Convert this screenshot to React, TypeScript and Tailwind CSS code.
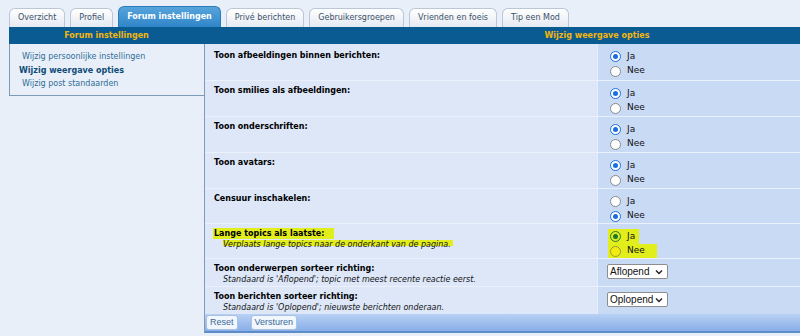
import React from 'react'

type Row = {
  label: string
  desc?: string
  kind: 'radio' | 'select'
  value: string
  h: string
  pt: string
  highlight?: boolean
}

const tabs = [
  'Overzicht',
  'Profiel',
  'Forum instellingen',
  'Privé berichten',
  'Gebruikersgroepen',
  'Vrienden en foeis',
  'Tip een Mod',
]

const rows: Row[] = [
  { label: 'Toon afbeeldingen binnen berichten:', kind: 'radio', value: 'ja', h: 'h-[36px]', pt: 'pt-[6px]' },
  { label: 'Toon smilies als afbeeldingen:', kind: 'radio', value: 'ja', h: 'h-[36px]', pt: 'pt-[4px]' },
  { label: 'Toon onderschriften:', kind: 'radio', value: 'ja', h: 'h-[36px]', pt: 'pt-[4px]' },
  { label: 'Toon avatars:', kind: 'radio', value: 'ja', h: 'h-[36px]', pt: 'pt-[4px]' },
  { label: 'Censuur inschakelen:', kind: 'radio', value: 'nee', h: 'h-[35px]', pt: 'pt-[4px]' },
  {
    label: 'Lange topics als laatste:',
    desc: 'Verplaats lange topics naar de onderkant van de pagina.',
    kind: 'radio',
    value: 'ja',
    h: 'h-[35px]',
    pt: 'pt-[4px]',
    highlight: true,
  },
  {
    label: 'Toon onderwerpen sorteer richting:',
    desc: "Standaard is 'Aflopend'; topic met meest recente reactie eerst.",
    kind: 'select',
    value: 'Aflopend',
    h: 'h-[28px]',
    pt: 'pt-[4px]',
  },
  {
    label: 'Toon berichten sorteer richting:',
    desc: "Standaard is 'Oplopend'; nieuwste berichten onderaan.",
    kind: 'select',
    value: 'Oplopend',
    h: 'h-[28px]',
    pt: 'pt-[4px]',
  },
]

const Radio = ({ checked, hl }: { checked: boolean; hl?: boolean }) => {
  if (hl) {
    return checked ? (
      <span className="flex h-[11px] w-[11px] items-center justify-center rounded-full border border-[#2f7a2a] bg-[#d8ec2a]">
        <span className="h-[5px] w-[5px] rounded-full bg-[#1f7a1f]" />
      </span>
    ) : (
      <span className="h-[11px] w-[11px] rounded-full border border-[#9c9a3a] bg-[#f2ec10]" />
    )
  }
  return checked ? (
    <span className="flex h-[11px] w-[11px] items-center justify-center rounded-full border border-[#1b6fe0] bg-white">
      <span className="h-[5px] w-[5px] rounded-full bg-[#1b6fe0]" />
    </span>
  ) : (
    <span className="h-[11px] w-[11px] rounded-full border border-[#8a8a8a] bg-white" />
  )
}

const RadioCell = ({ value, hl }: { value: string; hl?: boolean }) => (
  <div className="pl-[10px] pt-[5px] text-[9px] text-[#111]">
    <div className={`flex h-[15px] w-fit items-center gap-[6px] pl-[2px] pr-[4px] ${hl ? 'bg-[#e2ee1c]' : ''}`}>
      <Radio checked={value === 'ja'} hl={hl} />
      <span>Ja</span>
    </div>
    <div className={`flex h-[14px] w-fit items-center gap-[6px] pl-[2px] pr-[12px] ${hl ? 'bg-[#e2ee1c]' : ''}`}>
      <Radio checked={value === 'nee'} hl={hl} />
      <span>Nee</span>
    </div>
  </div>
)

const SelectCell = ({ value }: { value: string }) => (
  <div className="pl-[9px] pt-[5px]">
    <div className="flex h-[15px] w-[61px] items-center justify-between rounded-[2px] border border-[#8d8d8d] bg-white pl-[2px] pr-[4px] font-['Liberation_Sans',sans-serif] text-[10px] text-[#111]">
      <span>{value}</span>
      <svg width="8" height="6" viewBox="0 0 8 6" fill="none">
        <path d="M1 1.5l3 3 3-3" stroke="#222" strokeWidth="1.4" />
      </svg>
    </div>
  </div>
)

export default function App() {
  return (
    <div className="h-[336px] w-[800px] overflow-hidden bg-[#e9eff9] font-['DejaVu_Sans',sans-serif] text-[8px]">
      {/* tabs */}
      <div className="flex h-[27px] items-end gap-[5px] pl-[9px]">
        {tabs.map((t) =>
          t === 'Forum instellingen' ? (
            <div
              key={t}
              className="flex h-[21px] items-center rounded-t-[6px] border border-b-0 border-[#2b7bb8] bg-gradient-to-b from-[#57a4dc] to-[#2f86c8] px-[8px] font-bold text-white"
            >
              {t}
            </div>
          ) : (
            <div
              key={t}
              className="flex h-[19px] items-center rounded-t-[6px] border border-b-0 border-[#b9c7d6] bg-gradient-to-b from-white to-[#e4eaf2] px-[8px] text-[#3c5167]"
            >
              {t}
            </div>
          )
        )}
      </div>

      <div className="flex pl-[9px]">
        {/* left menu */}
        <div className="w-[195px] shrink-0">
          <div className="flex h-[17px] items-center justify-center bg-[#0b5b93] font-bold text-[#f2b60c]">
            Forum instellingen
          </div>
          <div className="flex flex-col border-b border-l border-[#7d9ab6] pb-[4px] pt-[6px] leading-[13.5px]">
            <span className="pl-[12px] text-[#2f6d97]">Wijzig persoonlijke instellingen</span>
            <span className="pl-[9px] font-bold text-[#104c78]">Wijzig weergave opties</span>
            <span className="pl-[12px] text-[#2f6d97]">Wijzig post standaarden</span>
          </div>
        </div>

        {/* options table */}
        <div className="w-[786px] shrink-0">
          <div className="flex h-[17px] items-center justify-center bg-[#0b5b93] font-bold text-[#f2b60c]">
            Wijzig weergave opties
          </div>
          <div className="border-l border-[#7d9ab6]">
            {rows.map((r, i) => (
              <div key={r.label} className={`flex ${r.h} ${i > 0 ? 'border-t border-[#eaf1fc]' : ''}`}>
                <div className={`w-[392px] shrink-0 bg-[#dde7f8] pl-[8px] ${r.pt} leading-[11px] text-[#000]`}>
                  <div className="font-bold">
                    <span className={r.highlight ? 'bg-[#e2ee1c] pl-[1px] pr-[10px] py-[1px]' : 'pl-[1px]'}>{r.label}</span>
                  </div>
                  {r.desc && (
                    <div className="pl-[10px] italic text-[#141414]">
                      <span
                        className={
                          r.highlight
                            ? 'bg-[linear-gradient(to_bottom,#e2ee1c_0%,#e2ee1c_65%,transparent_65%)] pr-[2px]'
                            : ''
                        }
                      >
                        {r.desc}
                      </span>
                    </div>
                  )}
                </div>
                <div className="flex-1 border-l border-[#e6eefb] bg-[#c9daf5]">
                  {r.kind === 'radio' ? (
                    <RadioCell value={r.value} hl={r.highlight} />
                  ) : (
                    <SelectCell value={r.value} />
                  )}
                </div>
              </div>
            ))}
            {/* buttons */}
            <div className="flex h-[19px] items-center gap-[13px] border-b-2 border-[#5d8dc8] bg-gradient-to-b from-[#b8d1f4] to-[#88ade8] pl-[1px]">
              <button className="h-[15px] rounded-[3px] border border-[#a9c2e2] bg-[#f2f7fd] px-[3px] font-['Liberation_Sans',sans-serif] text-[9px] text-[#3a6898]">
                Reset
              </button>
              <button className="h-[15px] rounded-[3px] border border-[#a9c2e2] bg-[#f2f7fd] px-[3px] font-['Liberation_Sans',sans-serif] text-[9px] text-[#3a6898]">
                Versturen
              </button>
            </div>
          </div>
        </div>
      </div>
    </div>
  )
}
